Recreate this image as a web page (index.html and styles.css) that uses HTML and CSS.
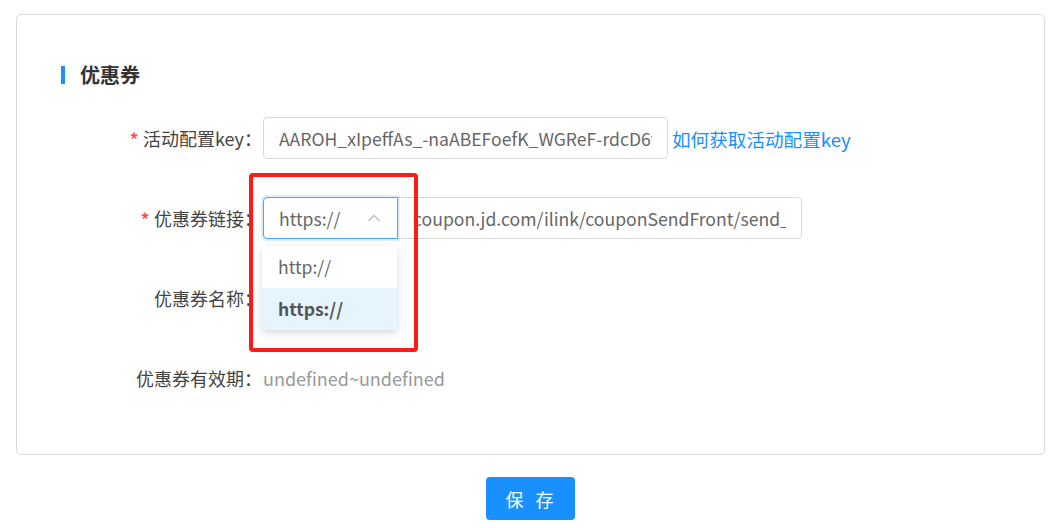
FILE: index.html
```html
<html><head><title>优惠券配置</title>
<link rel="stylesheet" href="styles.css">
</head>
<body>
    <div class="card">
        <div class="section-title">优惠券</div>

        <div class="form">
            <div class="form-row">
                <label class="form-label"><span class="required">*</span>活动配置key：</label>
                <div class="form-control">
                    <input type="text" class="text-input key-input" value="AAROH_xIpeffAs_-naABEFoefK_WGReF-rdcD6fJ2kLqZ" readonly>
                    <a class="help-link" href="#">如何获取活动配置key</a>
                </div>
            </div>

            <div class="form-row">
                <label class="form-label"><span class="required">*</span>优惠券链接：</label>
                <div class="form-control">
                    <div class="input-group">
                        <div class="select is-open">
                            <span class="select-value">https://</span>
                            <svg class="select-arrow" width="14" height="14" viewBox="0 0 14 14">
                                <path d="M1.5 10 L7 4.5 L12.5 10" fill="none" stroke="#bfbfbf" stroke-width="1.3"/>
                            </svg>
                            <ul class="select-menu">
                                <li class="select-option">http://</li>
                                <li class="select-option selected">https://</li>
                            </ul>
                        </div>
                        <input type="text" class="text-input url-input" value="coupon.jd.com/ilink/couponSendFront/send_index.action" readonly>
                    </div>
                </div>
            </div>

            <div class="form-row">
                <label class="form-label">优惠券名称：</label>
                <div class="form-control"></div>
            </div>

            <div class="form-row">
                <label class="form-label">优惠券有效期：</label>
                <div class="form-control">
                    <span class="plain-value">undefined~undefined</span>
                </div>
            </div>
        </div>

        <!-- annotation box round the open select -->
        <div class="highlight-box"></div>
    </div>

    <div class="actions">
        <button class="btn-primary">保 存</button>
    </div>
</body></html>
```

FILE: styles.css
```css
body {
    font-family: "Noto Sans CJK SC", "Noto Sans", sans-serif;
    background: #ffffff;
    margin: 0;
    padding: 14px 19px 0 16px;
    color: #333333;
}

.card {
    position: relative;
    border: 1px solid #d9d9d9;
    border-radius: 5px;
    padding: 48px 20px 53px 44px;
    height: 441px;
    box-sizing: border-box;
}

.section-title {
    display: flex;
    align-items: center;
    gap: 15px;
    font-size: 20px;
    font-weight: 700;
    line-height: 24px;
    color: #333333;
}

.section-title::before {
    content: "";
    width: 4px;
    height: 18px;
    background: #1890ff;
}

.form {
    display: flex;
    flex-direction: column;
    gap: 38px;
    margin-top: 30px;
}

.form-row {
    display: flex;
    align-items: center;
    height: 42px;
}

.form-label {
    width: 201px;
    margin-right: 1px;
    text-align: right;
    font-size: 18px;
    line-height: 24px;
    color: #444444;
    white-space: nowrap;
}

.required {
    color: #f5474a;
    margin-right: 4px;
    font-size: 21px;
    line-height: 1;
    vertical-align: -3px;
}

.form-control {
    display: flex;
    align-items: center;
    gap: 4px;
}

.text-input {
    height: 42px;
    padding: 0 15px;
    border: 1px solid #d9d9d9;
    border-radius: 4px;
    font-family: inherit;
    font-size: 17.6px;
    color: #666666;
    box-sizing: border-box;
    outline: none;
    background: white;
}

.key-input {
    width: 405px;
}

.help-link {
    color: #1890ff;
    font-size: 18.6px;
    text-decoration: none;
}

.input-group {
    display: flex;
}

.select {
    position: relative;
    width: 135px;
    height: 42px;
    padding: 0 15px;
    display: flex;
    align-items: center;
    justify-content: space-between;
    border: 1px solid #40a9ff;
    border-radius: 4px 0 0 4px;
    box-shadow: 0 0 0 2px rgba(24, 144, 255, 0.15);
    box-sizing: border-box;
    font-size: 17.6px;
    color: #666666;
    z-index: 1;
}

.select-arrow {
    margin-right: 1px;
}

.select-menu {
    position: absolute;
    top: 48px;
    left: -2px;
    width: 135px;
    margin: 0;
    padding: 0;
    list-style: none;
    background: white;
    border-radius: 4px;
    box-shadow: 0 3px 8px rgba(0, 0, 0, 0.15);
    overflow: hidden;
}

.select-option {
    height: 42px;
    line-height: 42px;
    padding-left: 16px;
    font-size: 17.6px;
    color: #666666;
}

.select-option.selected {
    background: #e6f4fd;
    font-weight: 700;
    color: #555555;
}

.url-input {
    width: 405px;
    margin-left: -1px;
    border-radius: 0 4px 4px 0;
}

.plain-value {
    font-size: 18px;
    color: #999999;
}

.highlight-box {
    position: absolute;
    left: 232px;
    top: 158px;
    width: 169px;
    height: 179px;
    border: 4px solid #ff1a1a;
    border-radius: 4px;
    box-sizing: border-box;
    z-index: 2;
}

.actions {
    display: flex;
    justify-content: center;
    margin-top: 22px;
}

.btn-primary {
    width: 89px;
    height: 43px;
    background-color: #1890ff;
    color: white;
    border: none;
    border-radius: 4px;
    font-family: inherit;
    font-size: 18px;
    letter-spacing: 4px;
    padding-left: 8px;
    cursor: pointer;
}
```
